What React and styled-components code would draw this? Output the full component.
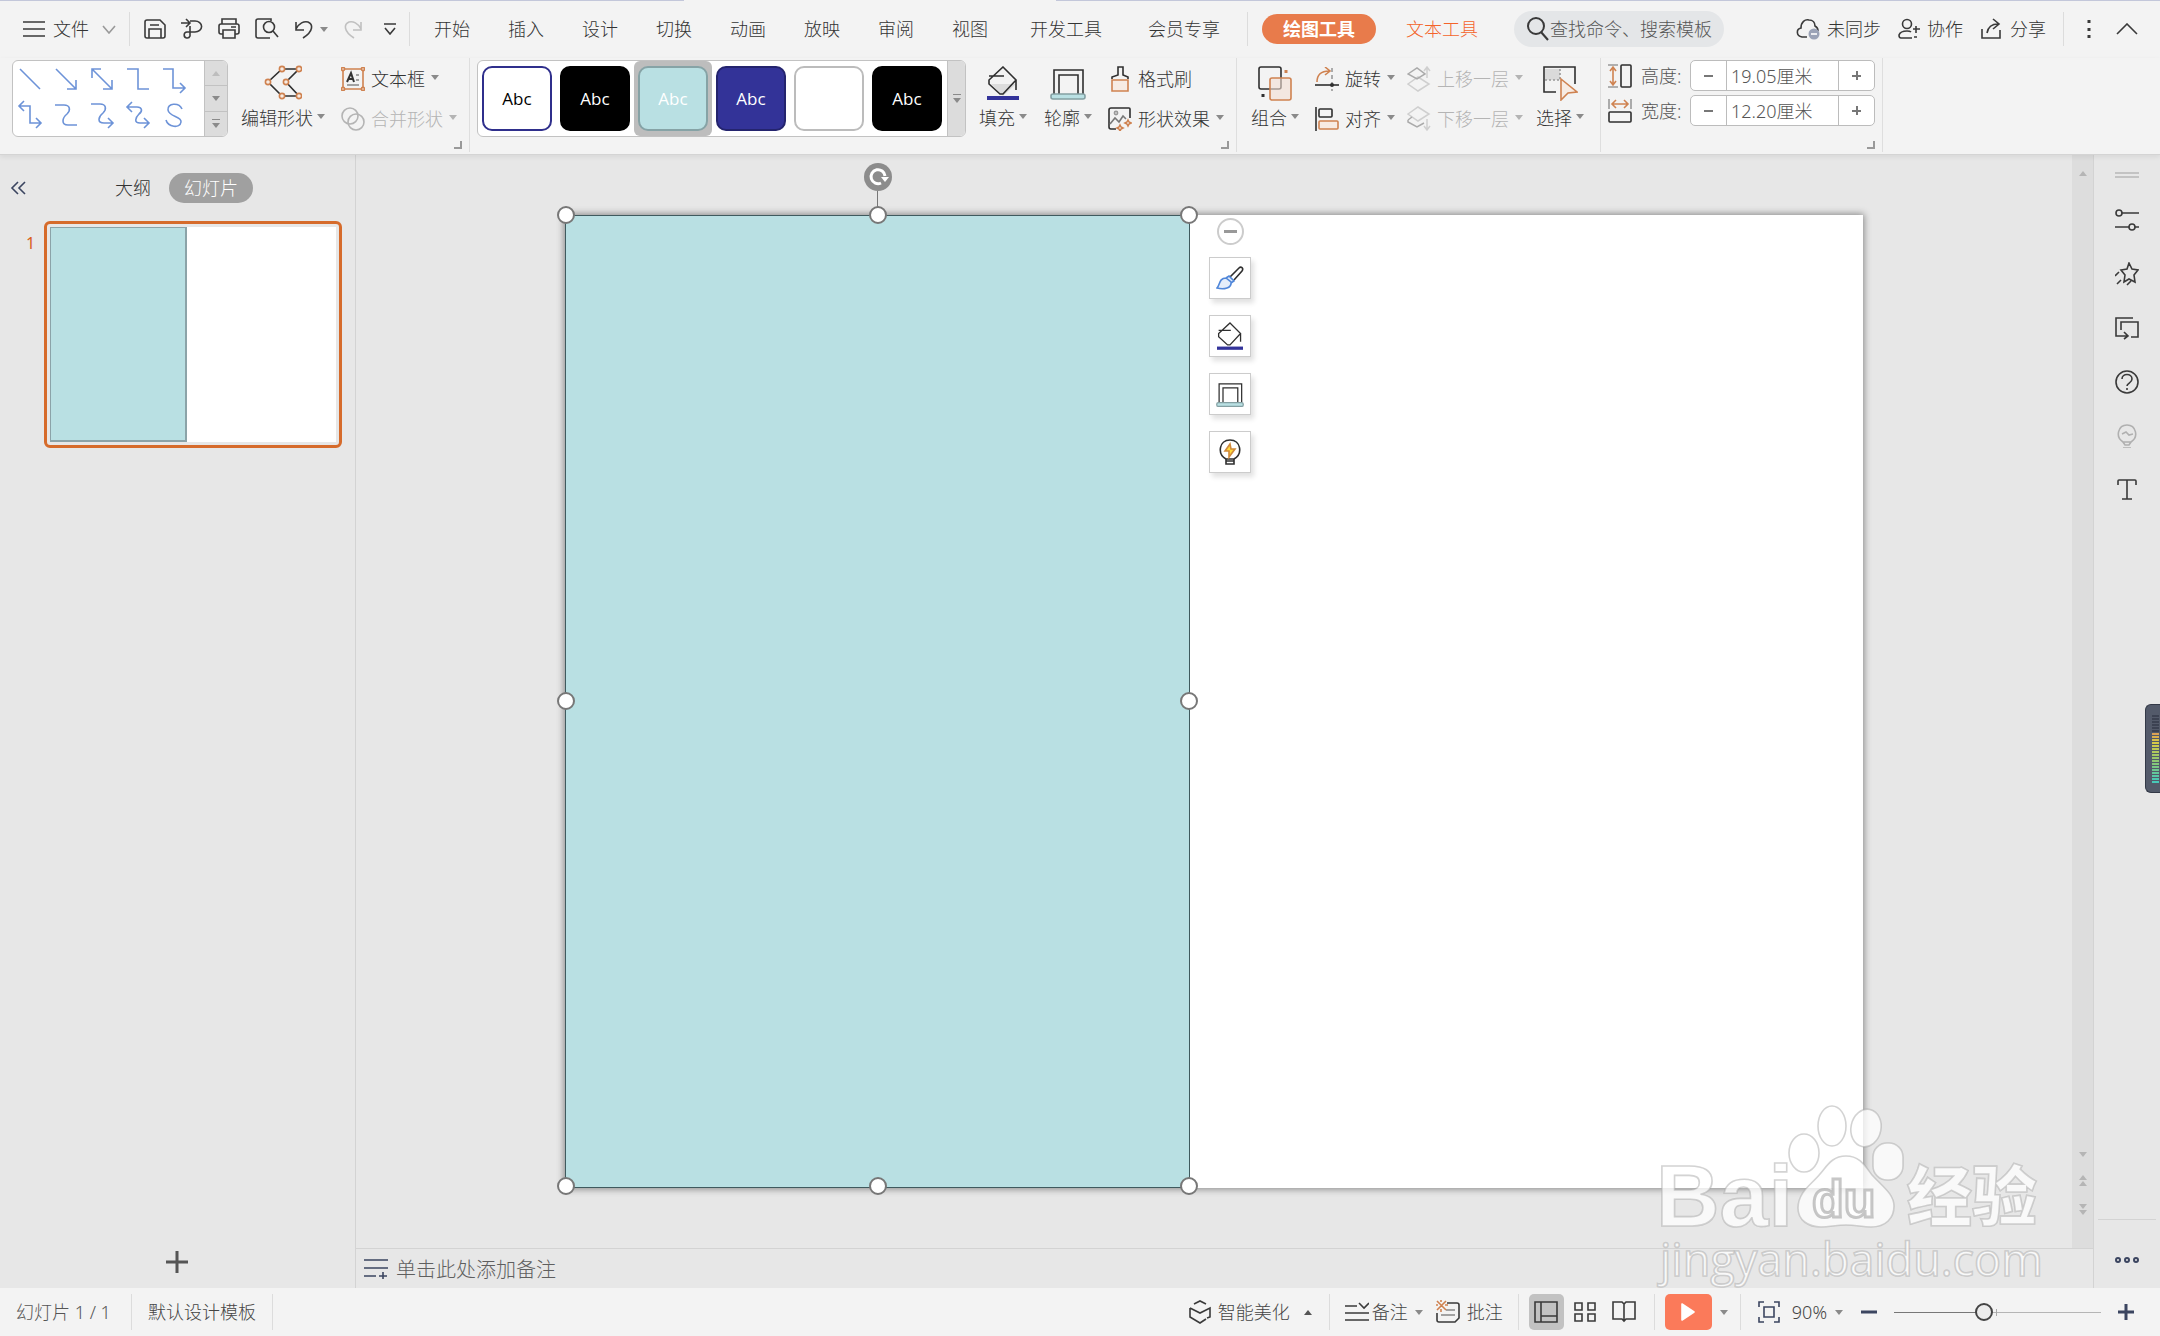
import React, { useState } from 'react'
import styled, { createGlobalStyle, css } from 'styled-components'

const GlobalStyle = createGlobalStyle`
  *, *::before, *::after { box-sizing: border-box; }
  body { margin: 0; }
  body, button, input {
    font-family: "Noto Sans", "Noto Sans CJK SC", sans-serif;
    font-size: 18px;
    font-weight: 300;
    line-height: 26px;
    color: #333;
  }
  button {
    display: flex;
    align-items: center;
    padding: 0;
    border: 0;
    background: none;
    white-space: nowrap;
    cursor: pointer;
  }
`
const Page = styled.div`
  position: relative;
  display: flex;
  flex-direction: column;
  min-height: 100vh;
  background: #e7e7e7;
  overflow: hidden;
`
const Svg = styled.svg`
  flex: none;
  display: block;
  fill: none;
  stroke: ${p => p.$color || '#3a3a3a'};
  stroke-width: ${p => p.$w || 1.6};
`

/* ---------- top bar ---------- */
const TitleLine = styled.div`
  display: flex;
  justify-content: space-between;
  height: 1px;
  background: #f3f3f3;
  &::before { content: ''; width: 684px; background: #c3c7da; }
  &::after { content: ''; width: calc(100% - 1056px); background: #c3c7da; }
`
const TopBar = styled.header`
  display: flex;
  align-items: center;
  height: 57px;
  padding: 0 22px 1px 23px;
  background: #f3f3f3;
`
const Divider = styled.div`
  flex: none;
  width: 1px;
  height: ${p => p.$h || 34}px;
  margin: 0 ${p => p.$right || 0}px 0 ${p => p.$left || 0}px;
  background: #dcdcdc;
`
const FileButton = styled.button`
  gap: 8px;
  margin-right: 13px;
  svg:last-child { margin-left: 5px; }
`
const QuickAccess = styled.div`
  display: flex;
  align-items: center;
  gap: 15px;
  padding: 0 13px 0 14px;
  > button:last-child { margin-left: 6px; }
`
const UndoGroup = styled.button`
  gap: 6px;
`
const Tabs = styled.nav`
  display: flex;
  padding: 0 4px 0 5px;
`
const Tab = styled.button`
  padding: 0 ${p => (p.$wide ? 23 : 19)}px;
`
const ActiveTab = styled.button`
  height: 30px;
  margin: 0 30px 0 14px;
  padding: 0 21px;
  border-radius: 15px;
  background: #e87b4b;
  color: #fff;
  font-weight: 700;
`
const TextToolTab = styled.button`
  margin-right: 36px;
  color: #f4632a;
`
const Search = styled.label`
  display: flex;
  align-items: center;
  width: 210px;
  height: 36px;
  padding-left: 12px;
  border-radius: 18px;
  background: #e4e6e8;
  input {
    width: 174px;
    padding: 0 0 0 1px;
    border: 0;
    outline: 0;
    background: none;
  }
  input::placeholder { color: #555; opacity: 1; }
`
const TopActions = styled.div`
  display: flex;
  align-items: center;
  gap: 17px;
  margin-left: auto;
`
const ActionGroup = styled.div`
  display: flex;
  gap: 17px;
`
const ActionButton = styled.button`
  gap: 7px;
`
const TopEnd = styled.div`
  display: flex;
  align-items: center;
  gap: 19px;
`

/* ---------- ribbon ---------- */
const Ribbon = styled.section`
  position: relative;
  display: flex;
  height: 97px;
  background: #f3f3f3;
  border-bottom: 1px solid #d4d4d4;
  box-shadow: 0 2px 5px rgba(0, 0, 0, .07);
`
const Group = styled.div`
  display: flex;
  flex-direction: column;
  height: 94px;
  padding: 0 7px 0 ${p => p.$left || 7}px;
  border-right: 1px solid #dedede;
`
const GroupBody = styled.div`
  display: flex;
  align-items: flex-start;
  height: 83px;
  padding: 2px ${p => p.$right || 0}px 0 0;
`
const Launcher = styled.button`
  align-self: flex-end;
  width: 8px;
  height: 8px;
  border-right: 2px solid #999;
  border-bottom: 2px solid #999;
`
const Gallery = styled.div`
  display: flex;
  height: 77px;
  border: 1px solid #c2c2c2;
  border-radius: 6px;
  background: #fff;
  overflow: hidden;
`
const LineGrid = styled.div`
  display: grid;
  grid-template-columns: repeat(5, 36px);
  grid-auto-rows: 36px;
  align-content: start;
  width: 191px;
  button { justify-content: center; }
`
const GalleryScroll = styled.div`
  display: flex;
  flex-direction: column;
  width: ${p => p.$w}px;
  border-left: 1px solid #c2c2c2;
  background: #dcdcdc;
  button { flex: 1; justify-content: center; }
  button + button { border-top: 1px solid #c2c2c2; }
`
const StyleRow = styled.div`
  display: flex;
  width: 469px;
`
const StyleCell = styled.button`
  width: 78px;
  height: 75px;
  padding: 0 4px;
  border-radius: 6px;
  ${p => p.$selected && css`background: #bdbdbd;`}
`
const StyleSwatch = styled.span`
  display: block;
  width: 100%;
  height: 65px;
  border: 2px solid ${p => p.$edge};
  border-radius: 10px;
  background: ${p => p.$fill};
  color: ${p => p.$text};
  font-family: "Open Sans", sans-serif;
  font-size: 17px;
  font-weight: 400;
  line-height: 61px;
  text-align: center;
`
const Big = styled.button`
  display: grid;
  grid-template-rows: 36px 26px;
  gap: 4px;
  justify-items: center;
  margin: 5px 0 0 ${p => p.$gap || 0}px;
`
const Caption = styled.span`
  display: flex;
  align-items: center;
  gap: 4px;
`
const SmallColumn = styled.div`
  display: flex;
  flex-direction: column;
  align-items: flex-start;
  gap: 14px;
  margin: 6px 0 0 ${p => p.$gap}px;
`
const Small = styled.button`
  gap: 6px;
  height: 26px;
  color: ${p => (p.disabled ? '#b4b4b4' : '#333')};
`
const CaretShape = styled.span`
  flex: none;
  width: 0;
  height: 0;
  margin-bottom: ${p => p.$lift || 0}px;
  margin-left: ${p => p.$before || 0}px;
  border: 4px solid transparent;
  border-${p => (p.$up ? 'bottom' : 'top')}: 5px solid ${p => p.$color || '#8a8a8a'};
  border-${p => (p.$up ? 'top' : 'bottom')}-width: 0;
`
const MoreCaret = styled.span`
  padding-top: 3px;
  border-top: 1px solid #8a8a8a;
`
const SizeRows = styled.div`
  display: flex;
  flex-direction: column;
  gap: 4px;
`
const SizeRow = styled.div`
  display: flex;
  align-items: center;
  label {
    width: 49px;
    margin-left: 9px;
    color: #555;
  }
`
const Spin = styled.div`
  display: flex;
  width: 185px;
  height: 31px;
  border: 1px solid #bcbcbc;
  border-radius: 5px;
  background: #fff;
  button {
    flex: none;
    width: 35px;
    justify-content: center;
  }
  input {
    flex: 1;
    min-width: 0;
    padding: 0 4px;
    border: solid #bcbcbc;
    border-width: 0 1px;
    outline: 0;
    color: #555;
  }
`

/* ---------- workspace ---------- */
const Workspace = styled.main`
  flex: 1;
  display: flex;
`
const SlidePanel = styled.aside`
  display: flex;
  flex-direction: column;
  width: 356px;
  border-right: 1px solid #d3d3d3;
`
const PanelHead = styled.div`
  display: flex;
  align-items: center;
  height: 30px;
  margin-top: 18px;
  padding-left: 10px;
`
const OutlineTab = styled.button`
  margin: 0 18px 0 88px;
`
const SlidesTab = styled.button`
  height: 30px;
  padding: 0 15px;
  border-radius: 15px;
  background: #a0a0a0;
  color: #fff;
`
const ThumbRow = styled.div`
  display: flex;
  margin-top: 18px;
  padding: 0 13px 0 26px;
`
const ThumbNumber = styled.span`
  width: 18px;
  padding-top: 9px;
  color: #d9601a;
  font-size: 16px;
  font-weight: 400;
`
const Thumb = styled.button`
  flex: 1;
  height: 227px;
  padding: 3px;
  border: 3px solid #d66b2b;
  border-radius: 6px;
`
const ThumbSlide = styled.span`
  flex: 1;
  display: flex;
  height: 215px;
  background: #fff;
  &::before {
    content: '';
    width: 48%;
    border: solid #8ba3a8;
    border-width: 1px 2px 2px 1px;
    background: #b9e0e3;
  }
`
const AddSlide = styled.button`
  align-self: center;
  margin: auto 2px 15px 0;
`
const Center = styled.div`
  flex: 1;
  display: flex;
  flex-direction: column;
`
const StageRow = styled.div`
  flex: 1;
  display: flex;
`
const Stage = styled.div`
  flex: 1;
  display: flex;
  align-items: center;
  justify-content: center;
  padding: 60px 0;
`
const Slide = styled.div`
  display: flex;
  height: 100%;
  aspect-ratio: 4 / 3;
  background: #fff;
  box-shadow: 0 0 7px 1px rgba(0, 0, 0, .42);
`
const Shape = styled.div`
  position: relative;
  width: calc(48% + 2px);
  border: 1px solid #3f5a5e;
  background: #b9e0e3;
`
const Handle = styled.span`
  position: absolute;
  left: ${p => p.$x}%;
  top: ${p => p.$y}%;
  width: 18px;
  height: 18px;
  margin: -10px -9px -9px;
  border: 2px solid #777;
  border-radius: 50%;
  background: #fff;
`
const Rotator = styled.button`
  position: absolute;
  left: 50%;
  bottom: 100%;
  flex-direction: column;
  margin-left: -14px;
  &::after { content: ''; width: 1px; height: 25px; background: #777; }
`
const FloatBar = styled.div`
  position: absolute;
  left: 100%;
  top: 2px;
  display: flex;
  flex-direction: column;
  align-items: center;
  gap: 16px;
  margin-left: 20px;
`
const FloatButton = styled.button`
  justify-content: center;
  width: 42px;
  height: 42px;
  border: 1px solid #ccc;
  background: #fff;
  box-shadow: 3px 4px 5px rgba(0, 0, 0, .12);
`
const Collapse = styled.button`
  justify-content: center;
  width: 27px;
  height: 27px;
  margin-bottom: -4px;
  border: 2px solid #ccc;
  border-radius: 50%;
  background: #fff;
  &::before { content: ''; width: 13px; height: 3px; background: #999; }
`
const ScrollTrack = styled.div`
  display: flex;
  flex-direction: column;
  align-items: center;
  width: 22px;
  padding: 16px 0 33px;
  border-right: 1px solid #d3d3d3;
  background: #dddddd;
`
const ScrollEnd = styled.div`
  display: flex;
  flex-direction: column;
  gap: 18px;
  margin-top: auto;
`
const Double = styled.span`
  display: flex;
  flex-direction: column;
  gap: 1px;
`
const Notes = styled.label`
  display: flex;
  align-items: center;
  gap: 8px;
  height: 40px;
  padding-left: 8px;
  border-top: 1px solid #d3d3d3;
  border-right: 1px solid #d3d3d3;
  input {
    flex: 1;
    padding: 2px 0 0;
    border: 0;
    outline: 0;
    background: none;
    font-size: 20px;
  }
  input::placeholder { color: #5f5f5f; opacity: 1; }
`
const SideBar = styled.aside`
  display: flex;
  flex-direction: column;
  align-items: center;
  gap: 30px;
  width: 66px;
  padding: 17px 4px 24px;
`
const SideFoot = styled.div`
  align-self: stretch;
  display: flex;
  justify-content: center;
  margin-top: auto;
  padding-top: 36px;
  border-top: 1px solid #d3d3d3;
`
const LevelMeter = styled.div`
  position: absolute;
  right: 0;
  top: 704px;
  width: 15px;
  height: 89px;
  padding: 10px 0 0 6px;
  border: 1px solid #333947;
  border-right: 0;
  border-radius: 6px 0 0 6px;
  background: #535a6a;
`

/* ---------- status bar ---------- */
const StatusBar = styled.footer`
  display: flex;
  align-items: center;
  height: 48px;
  padding: 0 26px 0 16px;
  background: #f3f3f3;
`
const StatusText = styled.span`
  min-width: 97px;
  color: #555;
`
const StatusButton = styled.button`
  gap: ${p => p.$gap || 7}px;
  margin-left: ${p => p.$left || 0}px;
  color: #444;
`
const StatusRight = styled.div`
  display: flex;
  align-items: center;
  margin-left: auto;
`
const ViewButton = styled.button`
  justify-content: center;
  width: 35px;
  height: 36px;
  margin-right: 4px;
  border-radius: 5px;
  ${p => p.$on && css`background: #c2c2c2;`}
`
const Play = styled.button`
  justify-content: center;
  width: 47px;
  height: 36px;
  margin-right: 8px;
  border-radius: 5px;
  background: #fb7a5a;
`
const ZoomSlider = styled.input`
  appearance: none;
  width: 207px;
  height: 20px;
  margin: 0 17px;
  background:
    linear-gradient(#aaa, #aaa) 102px 50% / 1px 7px no-repeat,
    linear-gradient(90deg, #777 44%, #b5b5b5 44%) 0 50% / 100% 1px no-repeat;
  &::-webkit-slider-thumb {
    appearance: none;
    width: 18px;
    height: 18px;
    border: 2px solid #444;
    border-radius: 50%;
    background: #ececec;
  }
`
const Watermark = styled.svg`
  position: absolute;
  right: 110px;
  bottom: 44px;
  pointer-events: none;
  fill: #fff;
  fill-opacity: .76;
  stroke: #a8a8a8;
  stroke-opacity: .5;
  stroke-width: 1.6;
`

const Caret = props => <CaretShape aria-hidden="true" {...props} />

const blue = '#6d93d8'
const orange = '#cf8250'

const connectors = [
  ['直线', 'M1 1l20 20'],
  ['箭头', 'M1 1l20 20M12 21h9v-9'],
  ['双箭头', 'M1 1l20 20M12 21h9v-9M10 1H1v9'],
  ['肘形', 'M0 1h11v20h11'],
  ['肘形箭头', 'M0 1h10v19h12M17 15l5 5-5 5'],
  ['肘形双箭头', 'M0 2h11v17h11M5-3L0 2l5 5M17 14l5 5-5 5'],
  ['曲线', 'M0 1h9c6 0 7 5 3 9-5 4-6 11 1 11h9'],
  ['曲线箭头', 'M0 0h9c6 0 7 5 3 9-5 4-6 10 1 10h9M17 14l5 5-5 5'],
  ['曲线双箭头', 'M0 3h10c5 0 6 4 2 7-4 4-5 9 1 9h9M5-2L0 3l5 5M17 14l5 5-5 5'],
  ['自由曲线', 'M19 5C16-2 4-1 5 6s14 6 13 12c-1 7-13 5-15-2'],
]

const styles = [
  { fill: '#fff', edge: '#2f2f8c', text: '#000' },
  { fill: '#000', edge: '#000', text: '#fff' },
  { fill: '#b9e0e3', edge: '#86a3a6', text: '#fff', selected: true },
  { fill: '#333398', edge: '#24246e', text: '#fff' },
  { fill: '#fff', edge: '#bcbcbc', text: '#fff', blank: true },
  { fill: '#000', edge: '#000', text: '#fff' },
]

const handles = [[0, 0], [50, 0], [100, 0], [0, 50], [100, 50], [0, 100], [50, 100], [100, 100]]

const meterColors = ['#3c4252', '#3c4252', '#3c4252', '#3c4252', '#3c4252', '#3c4252', '#dba254', '#dbb04c',
  '#d8c04a', '#d5c948', '#cbc94d', '#bec955', '#b1c95c', '#a5c963', '#9ac86a', '#8fc872', '#84c87b', '#79c885',
  '#6ec890', '#63c89b', '#58c8a6', '#4fc8b0', '#47c8b8']

function Layers({ down }) {
  return (
    <Svg width="24" height="26" $color="#cfcfcf" $w={1.5}>
      <path d={down ? 'M1 8l10-7 11 7-11 7z' : 'M1 18l10-7 11 7-11 7z'} />
      <path stroke="#aaa" d={down ? 'M1 14v2l9 5 7-4M1 14l4-3' : 'M1 8l9-6 8 6-8 5z'} />
      <path d={down ? 'M20 13v11M17 20l3 4 3-4' : 'M20 12V1M17 5l3-4 3 4'} />
    </Svg>
  )
}

function FillIcon({ small }) {
  return (
    <Svg width={small ? 26 : 32} height={small ? 28 : 34} viewBox="0 0 32 34" $color="#2f2f2f">
      {!small && <path d="M4 18h25L16 30z" fill="#dcdcdc" stroke="none" />}
      <path d="M16 1L29 14 16 28H13L2 18V14zM2 10h15M29 14v10" />
      <path d="M0 30h32v4H0z" fill="#33339a" stroke="none" />
    </Svg>
  )
}

function OutlineIcon({ small }) {
  return (
    <Svg width={small ? 28 : 36} height={small ? 28 : 34} viewBox="0 0 36 34" $color="#2f2f2f">
      <path d="M4 28V4h29v24M9 28V9h19v19" />
      <rect x="1" y="28" width="34" height="5" rx="2" fill="#b9e0e3" stroke="#84a0a3" />
    </Svg>
  )
}

function BrandMark() {
  return (
    <Watermark width="400" height="192" role="img" aria-label="Baidu 经验">
      <ellipse cx="154" cy="53" rx="15" ry="19" />
      <ellipse cx="182" cy="26" rx="14" ry="20" />
      <ellipse cx="216" cy="28" rx="15" ry="19" transform="rotate(12 216 28)" />
      <rect x="223" y="43" width="30" height="37" rx="14" />
      <path d="M196 56c-14 0-19 10-26 18-8 10-22 18-22 34 0 12 10 19 23 19 9 0 15-2 25-2s16 2 25 2c15 0 23-9 23-21s-12-20-22-31c-7-9-12-19-26-19z" />
      <g fontFamily="Liberation Sans, Arial, sans-serif" fontWeight="700">
        <text x="6" y="126" fontSize="88">Bai</text>
        <text x="162" y="117" fontSize="52" stroke="#909090" strokeWidth="3">du</text>
      </g>
      <text x="257" y="120" fontSize="65" fontWeight="900" fontFamily="Noto Sans CJK SC, sans-serif">经验</text>
      <text x="10" y="176" fontSize="45" fontWeight="400" fontFamily="Open Sans, sans-serif">jingyan.baidu.com</text>
    </Watermark>
  )
}

function Header() {
  return (
    <TopBar>
      <FileButton>
        <Svg width="22" height="16"><path d="M0 1h22M0 8h22M0 15h22" /></Svg>
        文件
        <Svg width="14" height="9" $color="#999"><path d="M1 1l6 7 6-7" /></Svg>
      </FileButton>
      <Divider />
      <QuickAccess>
        <button aria-label="保存">
          <Svg width="22" height="22"><path d="M3 2h13l5 5v11a2 2 0 01-2 2H3a2 2 0 01-2-2V4a2 2 0 012-2zM5 20v-9h12v9M6 7h9" /></Svg>
        </button>
        <button aria-label="输出">
          <Svg width="22" height="22"><path d="M0 5h8M5 1l4 4-4 4M9 3h5a6 5 0 010 11H6a3 3 0 103 4V8" /></Svg>
        </button>
        <button aria-label="打印">
          <Svg width="22" height="22"><path d="M4 6V1h14v5M5 16H3a2 2 0 01-2-2V8a2 2 0 012-2h16a2 2 0 012 2v6a2 2 0 01-2 2h-2M5 12h12v8H5zM13 9h5" /></Svg>
        </button>
        <button aria-label="打印预览">
          <Svg width="24" height="22"><path d="M15 20H3a2 2 0 01-2-2V3a2 2 0 012-2h13v2" /><circle cx="14" cy="9" r="5.5" /><path d="M18 13l5 6" /></Svg>
        </button>
        <UndoGroup aria-label="撤销">
          <Svg width="20" height="20"><path d="M2 3v8h8M2 10C5 4 10 2 14 3c5 2 6 9-5 16" /></Svg>
          <Caret />
        </UndoGroup>
        <button aria-label="恢复" disabled>
          <Svg width="20" height="20" $color="#c0c0c0"><path d="M18 3v8h-8M18 10C15 4 10 2 6 3 1 5 0 12 11 19" /></Svg>
        </button>
        <button aria-label="更多">
          <Svg width="12" height="12"><path d="M0 1h12M1 5l5 6 5-6" /></Svg>
        </button>
      </QuickAccess>
      <Divider />
      <Tabs>
        {['开始', '插入', '设计', '切换', '动画', '放映', '审阅', '视图'].map(t => <Tab key={t}>{t}</Tab>)}
        <Tab $wide>开发工具</Tab>
        <Tab $wide>会员专享</Tab>
      </Tabs>
      <Divider />
      <ActiveTab>绘图工具</ActiveTab>
      <TextToolTab>文本工具</TextToolTab>
      <Search>
        <Svg width="23" height="24" $w={2}><circle cx="10" cy="9" r="8" /><path d="M15 15l7 8" /></Svg>
        <input aria-label="搜索" placeholder="查找命令、搜索模板" />
      </Search>
      <TopActions>
        <ActionGroup>
          <ActionButton>
            <Svg width="24" height="22">
              <path d="M11 19H6c-6-1-6-8-1-9C5 4 9 1 13 2c4 0 6 3 6 6 2 1 3 2 3 5" />
              <circle cx="18" cy="16" r="5.5" fill="#9ba3b7" stroke="none" /><path stroke="#fff" d="M15 16h6" />
            </Svg>
            未同步
          </ActionButton>
          <ActionButton>
            <Svg width="22" height="22"><circle cx="9" cy="6" r="4.5" /><path d="M14 20H3c-2 0-2-2-2-3 1-3 3-4 8-4 1 0 3 0 4 1M15 11h7M18 8v7M16 19h3" /></Svg>
            协作
          </ActionButton>
          <ActionButton>
            <Svg width="23" height="22"><path d="M2 11v9h18v-8M7 15c1-6 5-9 11-9M13 1l6 5-6 5" /></Svg>
            分享
          </ActionButton>
        </ActionGroup>
        <TopEnd>
          <Divider />
          <button aria-label="更多选项">
            <Svg width="14" height="20"><path d="M6 1v3M6 9v3M6 16v3" strokeWidth="3" /></Svg>
          </button>
          <button aria-label="收起功能区">
            <Svg width="22" height="12"><path d="M1 11L11 1l10 10" /></Svg>
          </button>
        </TopEnd>
      </TopActions>
    </TopBar>
  )
}

function SizeField({ id, label, value, icon }) {
  const [size, setSize] = useState(value)
  return (
    <SizeRow>
      {icon}
      <label htmlFor={id}>{label}:</label>
      <Spin>
        <button aria-label={`减小${label}`}><Svg width="9" height="9" $color="#777" $w={2}><path d="M0 5h9" /></Svg></button>
        <input id={id} value={size} onChange={e => setSize(e.target.value)} />
        <button aria-label={`增大${label}`}><Svg width="9" height="9" $color="#777" $w={2}><path d="M0 5h9M5 0v9" /></Svg></button>
      </Spin>
    </SizeRow>
  )
}

function RibbonBar() {
  return (
    <Ribbon>
      <Group $left={12}>
        <GroupBody $right={5}>
          <Gallery>
            <LineGrid>
              {connectors.map(([name, d]) => (
                <button key={name} aria-label={name}>
                  <Svg width="28" height="30" viewBox="-2 -4 28 30" $color={blue}><path d={d} /></Svg>
                </button>
              ))}
            </LineGrid>
            <GalleryScroll $w={23}>
              <button aria-label="上一行" disabled><Caret $up $color="#bdbdbd" /></button>
              <button aria-label="下一行"><Caret /></button>
              <button aria-label="更多形状"><MoreCaret><Caret as="div" /></MoreCaret></button>
            </GalleryScroll>
          </Gallery>
          <Big $gap={13}>
            <Svg width="38" height="36" $color="#2f2f2f">
              <path d="M35 4H18L4 17l14 14h17L22 17z" />
              <g stroke={orange} fill="#f7ebe3">
                {[[35, 4], [18, 4], [4, 17], [18, 31], [35, 31], [22, 17]].map(([x, y]) => <circle key={`${x}-${y}`} cx={x} cy={y} r="2.6" />)}
              </g>
            </Svg>
            <Caption>编辑形状<Caret $lift={4} /></Caption>
          </Big>
          <SmallColumn $gap={16}>
            <Small>
              <Svg width="24" height="24" $color={orange}>
                <path d="M2 2h20v20H2z" />
                <g fill="#f7ebe3">
                  {[[2, 2], [22, 2], [2, 22], [22, 22]].map(([x, y]) => <circle key={`${x}-${y}`} cx={x} cy={y} r="1.6" />)}
                </g>
                <path stroke="#333" strokeWidth="2" d="M6 15l4-9 3 9M7 12h5" />
                <path stroke="#888" d="M15 8h3M15 13h3M6 18h12" />
              </Svg>
              文本框<Caret $lift={3} />
            </Small>
            <Small disabled>
              <Svg width="24" height="24" $color="#b4b4b4"><circle cx="9" cy="9" r="8" /><circle cx="15" cy="15" r="8" /></Svg>
              合并形状<Caret $lift={3} $color="#b4b4b4" />
            </Small>
          </SmallColumn>
        </GroupBody>
        <Launcher aria-label="形状设置" />
      </Group>

      <Group>
        <GroupBody $right={5}>
          <Gallery>
            <StyleRow>
              {styles.map((s, i) => (
                <StyleCell key={i} $selected={s.selected} aria-label={`样式 ${i + 1}`}>
                  <StyleSwatch $fill={s.fill} $edge={s.edge} $text={s.text}>{s.blank ? '' : 'Abc'}</StyleSwatch>
                </StyleCell>
              ))}
            </StyleRow>
            <GalleryScroll $w={18}>
              <button aria-label="更多样式"><MoreCaret><Caret as="div" /></MoreCaret></button>
            </GalleryScroll>
          </Gallery>
          <Big $gap={13}>
            <FillIcon />
            <Caption>填充<Caret $lift={4} /></Caption>
          </Big>
          <Big $gap={17}>
            <OutlineIcon />
            <Caption>轮廓<Caret $lift={4} /></Caption>
          </Big>
          <SmallColumn $gap={16}>
            <Small>
              <Svg width="24" height="26" $color="#2f2f2f">
                <path d="M4 13v-2l6-2V1h5v8l5 2v2" />
                <path stroke={orange} fill="#f7ebe3" d="M4 14h16v11H4z" />
              </Svg>
              格式刷
            </Small>
            <Small>
              <Svg width="24" height="24" $color="#2f2f2f">
                <path d="M8 22H3a2 2 0 01-2-2V3a2 2 0 012-2h18a1 1 0 011 1v9" />
                <path stroke="#777" d="M2 17l5-6 4 4 4-6 3 3" /><circle cx="8" cy="6" r="1.6" stroke="#999" />
                <path stroke={orange} d="M12 18l1 2 2 1-2 1-1 2-1-2-2-1 2-1zM20 13l1 2 2 1-2 1-1 2-1-2-2-1 2-1z" />
              </Svg>
              形状效果<Caret $lift={3} />
            </Small>
          </SmallColumn>
        </GroupBody>
        <Launcher aria-label="样式设置" />
      </Group>

      <Group $left={14}>
        <GroupBody $right={9}>
          <Big>
            <Svg width="34" height="36" $color="#2f2f2f">
              <rect x="1" y="2" width="22" height="22" rx="2" />
              <rect x="12" y="13" width="21" height="22" rx="2" stroke={orange} fill="#f3dfd3" fillOpacity=".6" />
              <path d="M5 29v3" strokeWidth="3" /><path d="M28 5v3" stroke={orange} strokeWidth="3" />
            </Svg>
            <Caption>组合<Caret $lift={4} /></Caption>
          </Big>
          <SmallColumn $gap={16}>
            <Small>
              <Svg width="24" height="24" $color="#2f2f2f">
                <path stroke={orange} d="M2 15C2 8 6 4 14 4M10 0l5 4-5 4" />
                <path stroke="#999" strokeDasharray="4 3" d="M17 1v23" />
                <path d="M0 18h24" /><circle cx="17" cy="18" r="2" fill="#2f2f2f" stroke="none" />
              </Svg>
              旋转<Caret $lift={3} />
            </Small>
            <Small>
              <Svg width="24" height="26" $color="#2f2f2f">
                <path d="M1 1v24" /><rect x="4" y="3" width="13" height="8" rx="1" />
                <rect x="4" y="15" width="19" height="8" rx="1" stroke={orange} fill="#f7ebe3" />
              </Svg>
              对齐<Caret $lift={3} />
            </Small>
          </SmallColumn>
          <SmallColumn $gap={12}>
            <Small disabled><Layers />上移一层<Caret $lift={3} $color="#b4b4b4" /></Small>
            <Small disabled><Layers down />下移一层<Caret $lift={3} $color="#b4b4b4" /></Small>
          </SmallColumn>
          <Big $gap={13}>
            <Svg width="36" height="36" $color="#2f2f2f">
              <path fill="#dadada" stroke="none" d="M3 4h15v11H3z" />
              <path strokeDasharray="2 2" stroke="#999" d="M18 4v11H3" />
              <path d="M14 27H2V2h31v17" />
              <path stroke={orange} fill="#f7ebe3" d="M19 14l16 13-9 1-7 7z" />
            </Svg>
            <Caption>选择<Caret $lift={4} /></Caption>
          </Big>
        </GroupBody>
      </Group>

      <Group>
        <GroupBody>
          <SizeRows>
            <SizeField
              id="shape-height"
              label="高度"
              value="19.05厘米"
              icon={(
                <Svg width="24" height="26" $color="#2f2f2f">
                  <path stroke="#999" d="M0 2h10M0 24h10" />
                  <path stroke={orange} d="M5 4v18M2 8l3-4 3 4M2 18l3 4 3-4" />
                  <rect x="13" y="2" width="10" height="22" rx="1" />
                </Svg>
              )}
            />
            <SizeField
              id="shape-width"
              label="宽度"
              value="12.20厘米"
              icon={(
                <Svg width="24" height="26" $color="#2f2f2f">
                  <path stroke="#999" d="M1 1v10M23 1v10" />
                  <path stroke={orange} d="M4 6h16M8 2L4 6l4 4M16 2l4 4-4 4" />
                  <rect x="1" y="14" width="22" height="10" rx="1" />
                </Svg>
              )}
            />
          </SizeRows>
        </GroupBody>
        <Launcher aria-label="大小设置" />
      </Group>
    </Ribbon>
  )
}

function SideIcons() {
  return (
    <SideBar>
      <Svg width="24" height="6" $color="#b8b8b8"><path d="M0 1h24M0 5h24" /></Svg>
      <button aria-label="属性">
        <Svg width="24" height="24"><circle cx="4" cy="5" r="3" /><path d="M7 5h17M0 19h14M20 19h4" /><circle cx="17" cy="19" r="3" /></Svg>
      </button>
      <button aria-label="动画">
        <Svg width="24" height="24"><path d="M14 1l3 6 6 1-4 5 1 7-6-3-5 3 1-7-4-5 6-1zM0 14l4-4M2 22l4-4M12 23l4-4" /></Svg>
      </button>
      <button aria-label="切换窗口">
        <Svg width="24" height="24"><path d="M18 2H1v18h11M9 16l4 4-4 3M6 14V6h17v15h-7" /></Svg>
      </button>
      <button aria-label="帮助">
        <Svg width="24" height="24"><circle cx="12" cy="12" r="11" /><path d="M7 9c0-6 10-6 10 0 0 4-5 4-5 7M12 18v2" /></Svg>
      </button>
      <button aria-label="提示">
        <Svg width="24" height="24" $color="#b0b0b0"><path d="M8 18c-8-5-5-17 4-17s12 12 4 17zM8 18l2 3h4l2-3M8 24h8M7 10l4-2 3 3 4-1" /></Svg>
      </button>
      <button aria-label="文本">
        <Svg width="24" height="24"><path d="M3 7V3q0-1 1-1h16q1 0 1 1v4M12 2v19M7 21h10" /></Svg>
      </button>
      <SideFoot>
        <button aria-label="更多工具">
          <Svg width="24" height="8" $color="#3b4560" $w={2}><circle cx="3" cy="4" r="2" /><circle cx="12" cy="4" r="2" /><circle cx="21" cy="4" r="2" /></Svg>
        </button>
      </SideFoot>
    </SideBar>
  )
}

function Footer() {
  const [zoom, setZoom] = useState(43)
  return (
    <StatusBar>
      <StatusText>幻灯片 1 / 1</StatusText>
      <Divider $h={36} $left={18} $right={16} />
      <StatusButton>默认设计模板</StatusButton>
      <Divider $h={36} $left={16} />
      <StatusRight>
        <StatusButton>
          <Svg width="22" height="24"><path d="M5 4l6-3 6 3M1 8v9l10 6 6-4M1 8l10 5 10-5v9l-3 1" /></Svg>
          智能美化
          <Caret $up $color="#555" $before={7} />
        </StatusButton>
        <Divider $h={36} $left={17} $right={15} />
        <StatusButton $gap={3}>
          <Svg width="24" height="20"><path d="M0 4h12M0 11h24M0 18h24M14 1l5 5 5-5" /></Svg>
          备注
          <Caret $before={4} />
        </StatusButton>
        <StatusButton $left={13}>
          <Svg width="24" height="24">
            <path d="M11 3h10a2 2 0 012 2v13l-4 4H3a2 2 0 01-2-2v-7" />
            <path stroke="#888" d="M10 10h9M5 15h14" />
            <path stroke={orange} d="M1 1l9 9M10 1l-9 9M5 0v2M5 9v3M0 5h2M9 5h3" />
          </Svg>
          批注
        </StatusButton>
        <Divider $h={36} $left={15} $right={10} />
        <ViewButton $on aria-label="普通视图">
          <Svg width="24" height="22"><path d="M1 1h22v20H1zM7 1v20M7 15h16" /></Svg>
        </ViewButton>
        <ViewButton aria-label="幻灯片浏览">
          <Svg width="22" height="20"><path d="M1 1h7v7H1zM14 1h7v7h-7zM1 12h7v7H1zM14 12h7v7h-7z" /></Svg>
        </ViewButton>
        <ViewButton aria-label="阅读视图">
          <Svg width="24" height="22"><path d="M12 3L10 1H1v17h9l2 2 2-2h9V1h-9zM12 3v17" /></Svg>
        </ViewButton>
        <Divider $h={36} $left={8} $right={10} />
        <Play aria-label="放映">
          <Svg width="14" height="18"><path d="M1 1v16l12-8z" fill="#fff" stroke="#fff" strokeLinejoin="round" /></Svg>
        </Play>
        <Caret />
        <Divider $h={36} $left={12} $right={17} />
        <StatusButton aria-label="适应窗口">
          <Svg width="22" height="22" $color="#3b4560"><path d="M1 6V1h5M16 1h5v5M21 16v5h-5M6 21H1v-5M6 6h10v10H6z" /></Svg>
        </StatusButton>
        <StatusButton $left={12} $gap={8}>90%<Caret /></StatusButton>
        <StatusButton $left={18} aria-label="缩小">
          <Svg width="16" height="16" $color="#3b4560" $w={3}><path d="M0 8h16" /></Svg>
        </StatusButton>
        <ZoomSlider type="range" aria-label="缩放" value={zoom} onChange={e => setZoom(e.target.value)} />
        <button aria-label="放大">
          <Svg width="16" height="16" $color="#3b4560" $w={3}><path d="M0 8h16M8 0v16" /></Svg>
        </button>
      </StatusRight>
    </StatusBar>
  )
}

export default function App() {
  return (
    <Page>
      <GlobalStyle />
      <TitleLine />
      <Header />
      <RibbonBar />
      <Workspace>
        <SlidePanel>
          <PanelHead>
            <button aria-label="收起面板">
              <Svg width="17" height="14" $color="#3b4560"><path d="M8 1L2 7l6 6M15 1L9 7l6 6" /></Svg>
            </button>
            <OutlineTab>大纲</OutlineTab>
            <SlidesTab>幻灯片</SlidesTab>
          </PanelHead>
          <ThumbRow>
            <ThumbNumber>1</ThumbNumber>
            <Thumb aria-label="幻灯片 1"><ThumbSlide /></Thumb>
          </ThumbRow>
          <AddSlide aria-label="新建幻灯片">
            <Svg width="22" height="22" $color="#555" $w={3}><path d="M0 11h22M11 0v22" /></Svg>
          </AddSlide>
        </SlidePanel>
        <Center>
          <StageRow>
            <Stage>
              <Slide>
                <Shape>
                  <Rotator aria-label="旋转形状">
                    <Svg width="28" height="28" $color="#fff" $w={3}>
                      <circle cx="14" cy="14" r="14" fill="#8c8c8c" stroke="none" />
                      <path d="M17 20a7 7 0 114-7" /><path d="M17 14h8l-4 5z" fill="#fff" stroke="none" />
                    </Svg>
                  </Rotator>
                  {handles.map(([x, y]) => <Handle key={`${x}-${y}`} $x={x} $y={y} />)}
                  <FloatBar>
                    <Collapse aria-label="收起" />
                    <FloatButton aria-label="画笔">
                      <Svg width="28" height="26" $color="#2f2f2f">
                        <path d="M14 12L23 3c2-2 5 0 3 3l-8 9" />
                        <path stroke="#4f86d9" fill="#e4edfa" d="M1 23c3-3 2-10 9-10l5 4c1 6-7 8-14 6zM10 13l3-2 5 5-3 2" />
                      </Svg>
                    </FloatButton>
                    <FloatButton aria-label="填充"><FillIcon small /></FloatButton>
                    <FloatButton aria-label="轮廓"><OutlineIcon small /></FloatButton>
                    <FloatButton aria-label="智能提示">
                      <Svg width="22" height="26" $color="#2f2f2f">
                        <path d="M7 20C-2 15 0 1 11 1s13 14 4 19zM7 20v5h8v-5M7 22h8" />
                        <path stroke="#d08a3c" fill="#ffd83b" d="M11 5L6 12h4v6l6-8h-4z" />
                      </Svg>
                    </FloatButton>
                  </FloatBar>
                </Shape>
              </Slide>
            </Stage>
            <ScrollTrack>
              <Caret $up $color="#b5b5b5" />
              <ScrollEnd>
                <Caret $color="#b5b5b5" />
                <Double><Caret $up $color="#b5b5b5" /><Caret $up $color="#b5b5b5" /></Double>
                <Double><Caret $color="#b5b5b5" /><Caret $color="#b5b5b5" /></Double>
              </ScrollEnd>
            </ScrollTrack>
          </StageRow>
          <Notes>
            <Svg width="24" height="20" $color="#3b4560"><path d="M0 1h24M0 9h24M0 17h12M15 17h8M19 13v8" /></Svg>
            <input aria-label="备注" placeholder="单击此处添加备注" />
          </Notes>
        </Center>
        <SideIcons />
      </Workspace>
      <Footer />
      <LevelMeter>
        <Svg width="7" height="69" $w={2}>
          {meterColors.map((c, i) => <path key={i} stroke={c} d={`M0 ${i * 3 + 1}h7`} />)}
        </Svg>
      </LevelMeter>
      <BrandMark />
    </Page>
  )
}
